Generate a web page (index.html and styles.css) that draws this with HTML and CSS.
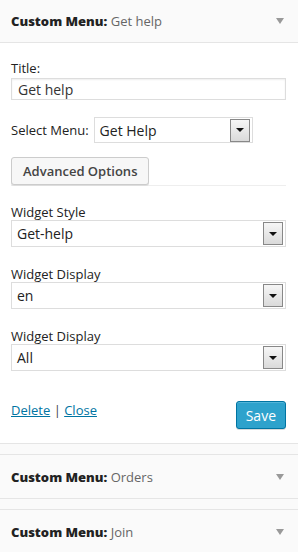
FILE: index.html
```html
<!DOCTYPE html>
<html lang="en">
<head>
    <meta charset="UTF-8">
    <meta name="viewport" content="width=device-width, initial-scale=1.0">
    <title>Custom Menu Widgets</title>
    <link rel="stylesheet" href="styles.css">
</head>
<body>

    <div class="widget open">
        <div class="widget-top">
            <h3><strong>Custom Menu:</strong> <span>Get help</span></h3>
            <span class="toggle"></span>
        </div>
        <div class="widget-inside">
            <p class="field title">
                <label>Title:</label>
                <input type="text" class="text-input" value="Get help">
            </p>
            <p class="field inline">
                <label>Select Menu:</label>
                <span class="select small"><span class="value">Get Help</span><span class="arrow"></span></span>
            </p>
            <div class="advanced">
                <button class="button">Advanced Options</button>
            </div>
            <p class="field">
                <label>Widget Style</label>
                <span class="select"><span class="value">Get-help</span><span class="arrow"></span></span>
            </p>
            <p class="field">
                <label>Widget Display</label>
                <span class="select"><span class="value">en</span><span class="arrow"></span></span>
            </p>
            <p class="field">
                <label>Widget Display</label>
                <span class="select"><span class="value">All</span><span class="arrow"></span></span>
            </p>
            <div class="controls">
                <div class="links"><a href="#">Delete</a> | <a href="#">Close</a></div>
                <button class="button primary">Save</button>
            </div>
        </div>
    </div>

    <div class="widget">
        <div class="widget-top">
            <h3><strong>Custom Menu:</strong> <span>Orders</span></h3>
            <span class="toggle"></span>
        </div>
    </div>

    <div class="widget">
        <div class="widget-top">
            <h3><strong>Custom Menu:</strong> <span>Join</span></h3>
            <span class="toggle"></span>
        </div>
    </div>

</body>
</html>
```

FILE: styles.css
```css
body {
    margin: 0;
    background: #fafafa;
    font-family: 'Open Sans', sans-serif;
    font-size: 13px;
    color: #444;
}
.widget {
    border-top: 1px solid #e5e5e5;
    border-bottom: 1px solid #e5e5e5;
    margin-bottom: 10px;
    background: #fafafa;
}
.widget.open {
    border-top: none;
}
.widget-top {
    height: 43px;
    display: flex;
    align-items: center;
    justify-content: space-between;
    padding: 0 11px;
}
.widget.open .widget-top {
    height: 42px;
    border-bottom: 1px solid #e5e5e5;
}
.widget-top h3 {
    margin: 0;
    font-size: 13px;
    font-weight: 600;
    color: #222;
}
.widget-top h3 span {
    font-weight: 400;
    color: #666;
}
.toggle {
    width: 0;
    height: 0;
    border-left: 4px solid transparent;
    border-right: 4px solid transparent;
    border-top: 6px solid #999;
    margin-right: 3px;
}
.widget-inside {
    background: #fff;
    padding: 17px 12px 14px 11px;
}
.field {
    margin: 0 0 19px;
}
.field label {
    display: block;
    line-height: 16px;
    color: #222;
}
.field.title {
    margin-bottom: 17px;
}
.field.title label {
    margin-bottom: 2px;
}
.field.inline {
    display: flex;
    align-items: center;
    margin-bottom: 14px;
}
.field.inline label {
    display: inline;
    margin: 0 5px 0 0;
}
.text-input {
    display: block;
    box-sizing: border-box;
    width: 100%;
    height: 22px;
    border: 1px solid #ddd;
    box-shadow: inset 0 1px 2px rgba(0, 0, 0, 0.07);
    font-family: 'Open Sans', sans-serif;
    font-size: 14px;
    color: #333;
    padding: 0 6px;
    margin: 0;
}
.select {
    box-sizing: border-box;
    display: flex;
    align-items: center;
    height: 27px;
    width: 100%;
    border: 1px solid #ddd;
    background: #fff;
    font-size: 14px;
    color: #222;
    padding: 0 2px 0 5px;
}
.select.small {
    width: 159px;
    height: 26px;
}
.select .value {
    flex: 1;
}
.arrow {
    box-sizing: border-box;
    width: 20px;
    height: 23px;
    border: 1px solid #888;
    background: linear-gradient(#f6f6f6, #dadada);
    display: flex;
    align-items: center;
    justify-content: center;
}
.arrow::after {
    content: "";
    border-left: 4px solid transparent;
    border-right: 4px solid transparent;
    border-top: 4px solid #111;
}
.advanced {
    display: flex;
    border-bottom: 1px solid #eee;
    margin-bottom: 18px;
}
.button {
    font-family: 'Open Sans', sans-serif;
    font-size: 13px;
    font-weight: 600;
    color: #444;
    background: #f7f7f7;
    border: 1px solid #ccc;
    border-radius: 3px;
    box-shadow: 0 1px 0 #ddd;
    height: 28px;
    padding: 0 11px;
    margin: 0;
    cursor: pointer;
}
.controls {
    display: flex;
    justify-content: space-between;
    align-items: flex-start;
    padding-top: 11px;
}
.links {
    color: #444;
    line-height: 18px;
}
.links a {
    color: #0074a2;
    text-decoration: underline;
}
.button.primary {
    background: #2ea2cc;
    border-color: #0074a2;
    color: #fff;
    font-weight: 400;
    font-size: 14px;
    margin-top: 0;
    padding: 0 9px;
    box-shadow: inset 0 1px 0 rgba(120, 200, 230, 0.5), 0 1px 0 rgba(0, 0, 0, 0.15);
}
```
